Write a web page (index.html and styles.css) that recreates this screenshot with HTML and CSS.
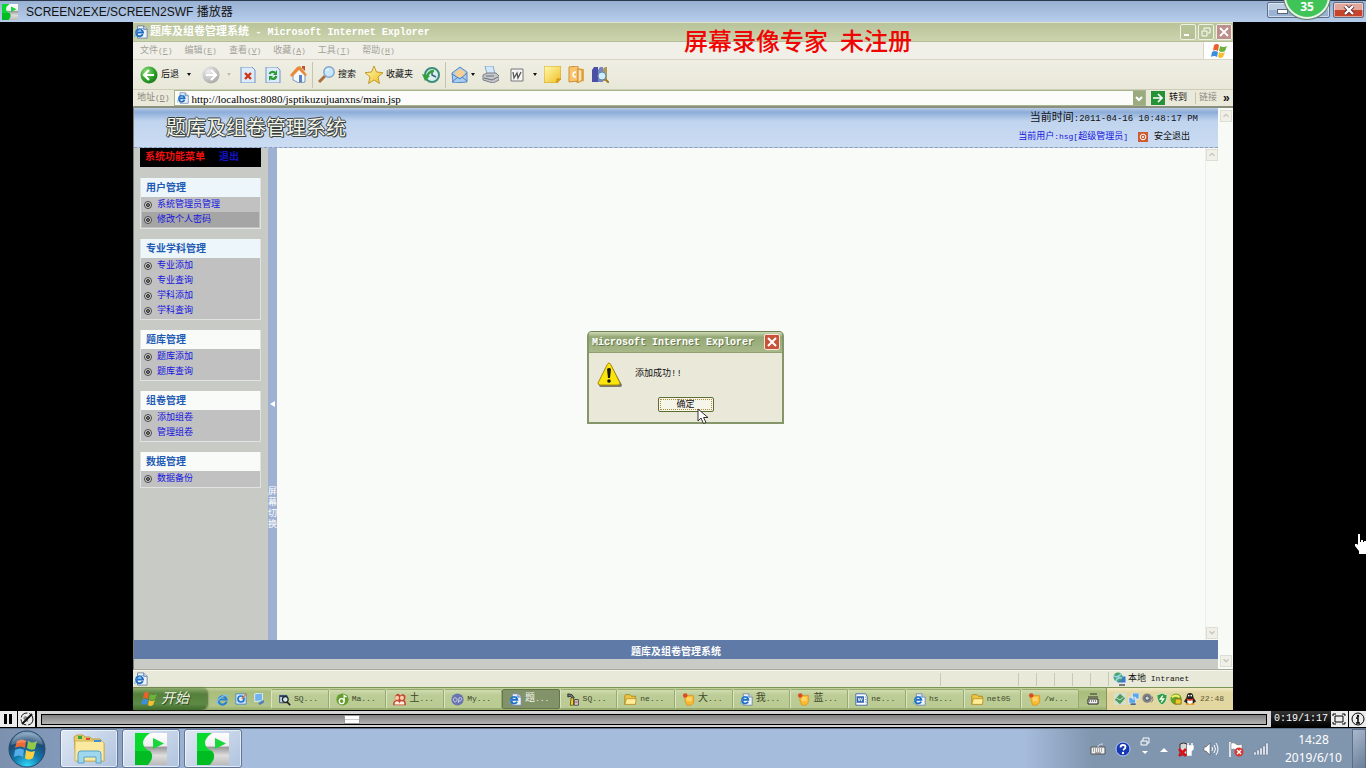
FILE: index.html
```html
<!DOCTYPE html>
<html lang="zh-CN">
<head>
    <meta charset="UTF-8">
    <meta name="viewport" content="width=device-width, initial-scale=1.0">
    <title>SCREEN2EXE/SCREEN2SWF 播放器</title>
    <link rel="stylesheet" href="styles.css">
</head>
<body>
    <!-- shared icons -->
    <svg class="defs" width="0" height="0">
        <defs>
            <linearGradient id="gold" x1="0" y1="0" x2="1" y2="1"><stop offset="0" stop-color="#fffbb0"/><stop offset="1" stop-color="#efbd22"/></linearGradient>
            <linearGradient id="silver" x1="0" y1="0" x2="0" y2="1"><stop offset="0" stop-color="#fff"/><stop offset=".4" stop-color="#eee"/><stop offset=".45" stop-color="#999"/><stop offset=".7" stop-color="#ddd"/><stop offset="1" stop-color="#bbb"/></linearGradient>
            <radialGradient id="green" cx=".35" cy=".3" r=".8"><stop offset="0" stop-color="#8fe07c"/><stop offset=".6" stop-color="#2fa02a"/><stop offset="1" stop-color="#17701a"/></radialGradient>
            <radialGradient id="grey" cx=".35" cy=".3" r=".8"><stop offset="0" stop-color="#eee"/><stop offset="1" stop-color="#a4a4a4"/></radialGradient>
            <radialGradient id="orb" cx=".5" cy="1" r="1"><stop offset="0" stop-color="#35e0ff"/><stop offset=".4" stop-color="#1278ac"/><stop offset=".75" stop-color="#1b4770"/><stop offset="1" stop-color="#8fb0cc"/></radialGradient>
        </defs>
        <symbol id="i-page" viewBox="0 0 16 16">
            <path d="M4 1h7l4 4v10H4z" fill="#eef4fc" stroke="#6a7fa0"/>
            <path d="M11 1v4h4" fill="#cdd9ea" stroke="#6a7fa0"/>
            <path d="M10 10.500A4 4 0 1 1 10.300 8.500H3" fill="none" stroke="#1f6cc4" stroke-width="2.200"/>
            <path d="M1 14C0 9 7 3 12 4" fill="none" stroke="#57a5e6"/>
        </symbol>
        <symbol id="i-ie" viewBox="0 0 16 16">
            <path d="M13 10.500A5 5 0 1 1 13 8H4" fill="none" stroke="#2680d8" stroke-width="2.600"/>
            <path d="M1 14C0 9 9 1 15 3" fill="none" stroke="#7cc4f2" stroke-width="1.300"/>
        </symbol>
        <symbol id="i-flag" viewBox="0 0 16 16">
            <path d="M3 2q3-2 5 0L7 8Q4 6 2 8z" fill="#e8612b"/>
            <path d="M9 3q3 2 7 0l-2 5q-3 2-6 0z" fill="#6cb33e"/>
            <path d="M1 9q3-2 6 0l-1 5Q3 12 0 14z" fill="#3d8fdc"/>
            <path d="M8 9q3 2 6 0l-2 5q-3 2-5 0z" fill="#f5bf2e"/>
        </symbol>
        <symbol id="i-folder" viewBox="0 0 16 16">
            <path d="M1 14V3l1-1h5l2 2h5v10z" fill="#f0c540" stroke="#a8821c"/>
            <path d="M1 14l2-7h12l-1 7z" fill="#ffed98" stroke="#b5902a"/>
        </symbol>
        <symbol id="i-note" viewBox="0 0 16 16">
            <path d="M3 3h11q1 6 0 9l-3 3H6q-3-5-3-12z" fill="#f9b930" stroke="#d9860f" stroke-width=".7"/>
            <path d="M5 5h7v5H6z" fill="#fdd567"/>
            <circle cx="4" cy="3" r="2.800" fill="#d94d22"/>
        </symbol>
        <symbol id="i-s" viewBox="0 0 32 32">
            <path d="M0 0h32v32H0z" fill="url(#silver)"/>
            <path d="M0 0h15Q8 5 8 10t7 8q5 6-2 13v1H0z" fill="#08d92d"/>
            <path d="M0 18h15q5 6-2 14H0z" fill="#00ac20" opacity=".65"/>
            <path d="M18 5l11 5.500-11 5.500z" fill="#18d63b"/>
        </symbol>
        <symbol id="i-bullet" viewBox="0 0 10 10">
            <circle cx="5" cy="5" r="3.500" fill="#d4d4d4" stroke="#444"/>
            <circle cx="5" cy="5" r="1.500" fill="#888" stroke="#222"/>
        </symbol>
        <symbol id="i-up" viewBox="0 0 12 12"><path d="M3 7l3-3 3 3" fill="none" stroke="#c4c6bc" stroke-width="1.600"/></symbol>
        <symbol id="i-down" viewBox="0 0 12 12"><path d="M3 4l3 3 3-3" fill="none" stroke="#c4c6bc" stroke-width="1.600"/></symbol>
        <symbol id="i-doc" viewBox="0 0 16 16">
            <path d="M1 1h12l2 3v11H1z" fill="#fff" stroke="#2e569c"/>
            <path d="M2 4h9v8H2z" fill="#2f62ad"/>
            <path d="M4 6l1 4 1.500-4L8 10l1-4" fill="none" stroke="#fff"/>
            <path d="M12 5h2M12 8h2M12 11h2" stroke="#5c83bd"/>
        </symbol>
    </svg>

    <header class="player-title">
        <svg class="player-logo"><use href="#i-s"/></svg>
        <h1>SCREEN2EXE/SCREEN2SWF 播放器</h1>
        <div class="player-buttons">
            <button class="win-min" aria-label="最小化"><i></i></button>
            <button class="win-close" aria-label="关闭">
                <svg width="12" height="10" viewBox="0 0 12 10"><path d="M2 1l8 8M10 1L2 9" stroke="#59303a" stroke-width="4"/><path d="M2 1l8 8M10 1L2 9" stroke="#fff" stroke-width="2.400"/></svg>
            </button>
        </div>
        <span class="fps-badge">35</span>
    </header>

    <main class="stage">
        <div class="screen">
            <div class="ie-title">
                <svg class="ic14"><use href="#i-page"/></svg>
                <h2>题库及组卷管理系统 <span class="en">- Microsoft Internet Explorer</span></h2>
                <div class="ie-buttons">
                    <button aria-label="最小化"><svg viewBox="0 0 14 14"><path d="M3 10h5" stroke="#fff" stroke-width="2"/></svg></button>
                    <button aria-label="还原"><svg viewBox="0 0 14 14"><path d="M5 5V3h6v5H9M3 6h5v5H3z" fill="none" stroke="#fff"/></svg></button>
                    <button class="close" aria-label="关闭"><svg viewBox="0 0 14 14"><path d="M3 3l8 8M11 3l-8 8" stroke="#fff" stroke-width="1.800"/></svg></button>
                </div>
            </div>
            <nav class="ie-menu">
                <button>文件<span class="en">(<u>F</u>)</span></button>
                <button>编辑<span class="en">(<u>E</u>)</span></button>
                <button>查看<span class="en">(<u>V</u>)</span></button>
                <button>收藏<span class="en">(<u>A</u>)</span></button>
                <button>工具<span class="en">(<u>T</u>)</span></button>
                <button>帮助<span class="en">(<u>H</u>)</span></button>
                <div class="throbber"><svg class="ic16"><use href="#i-flag"/></svg></div>
            </nav>
            <div class="ie-tools">
                <div class="group">
                    <button class="back">
                        <svg class="ic18" viewBox="0 0 18 18"><circle cx="9" cy="9" r="8.500" fill="url(#green)"/><path d="M9 4L4 9l5 5M4.500 9H14" fill="none" stroke="#fff" stroke-width="2.200"/></svg>
                        后退<i class="caret"></i>
                    </button>
                    <button class="forward" aria-label="前进">
                        <svg class="ic18" viewBox="0 0 18 18"><circle cx="9" cy="9" r="8.500" fill="url(#grey)"/><path d="M9 4l5 5-5 5M13.500 9H4" fill="none" stroke="#fff" stroke-width="2.200"/></svg>
                        <i class="caret off"></i>
                    </button>
                    <button aria-label="停止"><svg class="ic16" viewBox="0 0 16 16"><path d="M1 0h11l3 3v13H1z" fill="#dcecfc" stroke="#7394c4"/><path d="M5 6l6 6M11 6l-6 6" stroke="#d33413" stroke-width="2.400"/></svg></button>
                    <button aria-label="刷新"><svg class="ic16" viewBox="0 0 16 16"><path d="M1 0h11l3 3v13H1z" fill="#dcecfc" stroke="#7394c4"/><path d="M4.500 7Q6 4 10 5.500M11.500 9Q10 13 6 11.500" fill="none" stroke="#2a9a35" stroke-width="2.200"/><path d="M12 3v5H8zM4 14V9h4z" fill="#2a9a35"/></svg></button>
                    <button aria-label="主页"><svg class="ic17" viewBox="0 0 17 17"><path d="M3 8l6-5 6 6v7l-6 1-6-3z" fill="#f4f7fc" stroke="#7f96bd"/><path d="M9 9h3v7l-3 1z" fill="#5683c2"/><path d="M0 9l7-8 3-1 7 9-2 1-6-6-7 7z" fill="#e98a3a"/><path d="M12 0h3v5l-3-3z" fill="#c2502b"/></svg></button>
                    <i class="sep"></i>
                    <button class="label">
                        <svg class="ic17" viewBox="0 0 17 17"><path d="M1 16l6-6" stroke="#a9703f" stroke-width="3"/><circle cx="11" cy="6" r="5.200" fill="#c9e7fb" stroke="#7fa4d0" stroke-width="1.400"/><path d="M8 5q1-2 3-2" stroke="#fff" fill="none"/></svg>
                        搜索
                    </button>
                    <button class="label">
                        <svg class="ic18" viewBox="0 0 18 18"><path d="M9 0l2.500 6 6.500.700-5 4.300 1.500 6.500L9 14l-5.500 3.500L5 11 0 6.700 6.500 6z" fill="url(#gold)" stroke="#bd9122" stroke-width=".9"/></svg>
                        收藏夹
                    </button>
                    <button aria-label="历史"><svg class="ic18" viewBox="0 0 18 18"><circle cx="10" cy="9" r="7" fill="#d9f0ee" stroke="#3c8d78" stroke-width="2"/><path d="M10 4v5l4 2" fill="none" stroke="#355f7c" stroke-width="1.400"/><path d="M4 13Q6 5 12 5" fill="none" stroke="#35a13b" stroke-width="2.500"/><path d="M0 8l8 2-5 5z" fill="#35a13b"/></svg></button>
                    <i class="sep"></i>
                </div>
                <div class="group tight">
                    <button class="mail" aria-label="邮件"><svg class="ic17" viewBox="0 0 17 17"><path d="M1 7l8-6 7 5v10L2 17z" fill="#a8cdf1" stroke="#5b88bd"/><path d="M4 6l5-3 5 3-1 5H5z" fill="#f6d097"/><path d="M1 8l8 5 7-6M1 16l6-5M16 15l-5-4" fill="none" stroke="#4d7fba"/></svg><i class="caret"></i></button>
                    <button aria-label="打印"><svg class="ic17" viewBox="0 0 17 17"><path d="M3 0h8l2 8H5z" fill="#d3e8fb" stroke="#88a6c6"/><path d="M1 9l4-2h9l3 3v4l-6 3-10-3z" fill="#c5c7cb" stroke="#7a7e87"/><path d="M2 12l8 2 6-3M4 10h8" fill="none" stroke="#6c7078"/></svg></button>
                    <button class="word" aria-label="编辑"><svg class="ic14" viewBox="0 0 14 14"><path d="M1 1h12v12H1z" fill="#f5f5f5" stroke="#777"/><path d="M3 4l1 6 3-5 1 5 3-6" fill="none" stroke="#555" stroke-width="1.300"/></svg><i class="caret"></i></button>
                    <button aria-label="便笺"><svg class="ic17" viewBox="0 0 17 17"><path d="M0 0h17v13l-4 4H0z" fill="url(#gold)" stroke="#d6a52b"/><path d="M13 17v-4h4" fill="#e3a51c" stroke="#c98e16"/></svg></button>
                    <button aria-label="文件夹"><svg class="ic17" viewBox="0 0 17 17"><path d="M8 2l8 1v12l-8 2z" fill="#e7a948"/><path d="M1 1l9-1v15l-9 1z" fill="#f9c46d" stroke="#cf8f34"/><path d="M10 3l4 1v10l-4 3z" fill="#fbe0ae" stroke="#cf8f34"/><path d="M8 6q-3 0-3 2.500T8 11" fill="none" stroke="#fff" stroke-width="1.400"/></svg></button>
                    <button aria-label="信息检索"><svg class="ic17" viewBox="0 0 17 17"><path d="M0 4l2-3h4v15H0z" fill="#4b50a5"/><path d="M6 4l2-3h3v15H6z" fill="#7487c5"/><path d="M11 3l2-2h2v14h-4z" fill="#b09a58"/><circle cx="10" cy="10" r="4" fill="#d3ecf9" stroke="#5b87b0"/><path d="M13 13l4 4" stroke="#9f7b2b" stroke-width="2"/></svg></button>
                </div>
            </div>
            <div class="ie-address">
                <label for="url">地址<span class="en">(<u>D</u>)</span></label>
                <div class="url-box">
                    <svg class="ic12"><use href="#i-page"/></svg>
                    <input id="url" type="text" value="http://localhost:8080/jsptikuzujuanxns/main.jsp">
                    <button class="drop" aria-label="地址列表"><svg viewBox="0 0 12 13"><path d="M3 5l3 3 3-3" fill="none" stroke="#fff" stroke-width="2"/></svg></button>
                </div>
                <button class="go"><svg class="ic14" viewBox="0 0 14 14"><path d="M0 0h14v14H0z" fill="#259238"/><path d="M7 3l4 4-4 4M11 7H2" fill="none" stroke="#fff" stroke-width="1.700"/></svg>转到</button>
                <button class="links">链接</button>
                <span class="more">»</span>
            </div>

            <div class="viewport">
                <div class="page">
                    <div class="banner">
                        <div class="banner-title">题库及组卷管理系统</div>
                        <div class="banner-info">
                            <p class="now"><span class="cn">当前时间</span>:2011-04-16 10:48:17 PM</p>
                            <p class="user">
                                <a href="#">当前用户<span class="en">:hsg[</span>超级管理员<span class="en">]</span></a>
                                <svg width="10" height="10" viewBox="0 0 10 10"><path d="M0 0h10v10H0z" fill="#cf5a33"/><circle cx="5" cy="5" r="2.800" fill="none" stroke="#fff"/><circle cx="5" cy="5" r="1" fill="#fff"/></svg>
                                <a href="#" class="logout">安全退出</a>
                            </p>
                        </div>
                    </div>
                    <div class="frames">
                        <aside class="sidebar">
                            <div class="menu-top"><b>系统功能菜单</b><a href="#">退出</a></div>
                            <section class="menu-box tint">
                                <h3>用户管理</h3>
                                <ul>
                                    <li><svg><use href="#i-bullet"/></svg><a href="#">系统管理员管理</a></li>
                                    <li class="hover"><svg><use href="#i-bullet"/></svg><a href="#">修改个人密码</a></li>
                                </ul>
                            </section>
                            <section class="menu-box tint">
                                <h3>专业学科管理</h3>
                                <ul>
                                    <li><svg><use href="#i-bullet"/></svg><a href="#">专业添加</a></li>
                                    <li><svg><use href="#i-bullet"/></svg><a href="#">专业查询</a></li>
                                    <li><svg><use href="#i-bullet"/></svg><a href="#">学科添加</a></li>
                                    <li><svg><use href="#i-bullet"/></svg><a href="#">学科查询</a></li>
                                </ul>
                            </section>
                            <section class="menu-box">
                                <h3>题库管理</h3>
                                <ul>
                                    <li><svg><use href="#i-bullet"/></svg><a href="#">题库添加</a></li>
                                    <li><svg><use href="#i-bullet"/></svg><a href="#">题库查询</a></li>
                                </ul>
                            </section>
                            <section class="menu-box">
                                <h3>组卷管理</h3>
                                <ul>
                                    <li><svg><use href="#i-bullet"/></svg><a href="#">添加组卷</a></li>
                                    <li><svg><use href="#i-bullet"/></svg><a href="#">管理组卷</a></li>
                                </ul>
                            </section>
                            <section class="menu-box">
                                <h3>数据管理</h3>
                                <ul>
                                    <li><svg><use href="#i-bullet"/></svg><a href="#">数据备份</a></li>
                                </ul>
                            </section>
                        </aside>
                        <button class="toggle">
                            <svg width="5" height="6" viewBox="0 0 5 6"><path d="M5 0v6L0 3z" fill="#fff"/></svg>
                            <span>屏幕切换</span>
                        </button>
                        <div class="content"></div>
                        <div class="scrollbar inner">
                            <button aria-label="向上"><svg><use href="#i-up"/></svg></button>
                            <button aria-label="向下"><svg><use href="#i-down"/></svg></button>
                        </div>
                    </div>
                    <footer class="page-footer">题库及组卷管理系统</footer>
                </div>
                <div class="scrollbar">
                    <button aria-label="向上"><svg><use href="#i-up"/></svg></button>
                    <button aria-label="向下"><svg><use href="#i-down"/></svg></button>
                </div>
            </div>

            <div class="ie-status">
                <svg class="ic14"><use href="#i-page"/></svg>
                <div class="cells"><i class="wide"></i><i></i><i></i><i></i><i></i><i></i></div>
                <div class="zone">
                    <svg class="ic14" viewBox="0 0 14 14"><path d="M4 4h9v7H4z" fill="#3c77c8" stroke="#dfe9f4"/><circle cx="5" cy="5" r="4.500" fill="#46a46d"/><path d="M1 4q4 2 7-2M3 9q1-4 6-3" stroke="#9cd5f0" fill="none" stroke-width="1.500"/><path d="M6 13h6" stroke="#555" stroke-width="1.500"/></svg>
                    <span>本地<span class="en"> Intranet</span></span>
                </div>
            </div>

            <div class="xp-bar">
                <button class="start"><svg class="ic16"><use href="#i-flag"/></svg>开始</button>
                <div class="quick">
                    <svg class="ic13"><use href="#i-ie"/></svg>
                    <svg class="ic12" viewBox="0 0 14 14"><path d="M1 1h12v12H1z" fill="#dceafa" stroke="#3c84cd"/><circle cx="7" cy="7" r="3.500" fill="none" stroke="#2377cb" stroke-width="2"/><path d="M8 7l5-6" stroke="#e1762b" stroke-width="1.500"/></svg>
                    <svg class="ic12" viewBox="0 0 14 14"><path d="M2 1l9-1v9l-9 1z" fill="#70b2ef" stroke="#e8f3fd"/><path d="M6 12l6-4 1 3-5 3z" fill="#4e80c0"/></svg>
                </div>
                <div class="tasks">
                    <button><svg class="ic13" viewBox="0 0 16 16"><path d="M2 3h9v9H2z" fill="#c6d2e5" stroke="#27374d"/><path d="M2 3h9v2H2z" fill="#26467d"/><circle cx="9" cy="8" r="3.500" fill="#cde9ee" stroke="#222" stroke-width="1.500"/><path d="M11 11l4 4" stroke="#222" stroke-width="2"/></svg>SQ...</button>
                    <button><svg class="ic13" viewBox="0 0 16 16"><circle cx="8" cy="8" r="7.500" fill="#659d2f"/><circle cx="7" cy="10" r="3" fill="none" stroke="#fff" stroke-width="1.600"/><path d="M10 10V3l3 2" fill="none" stroke="#fff" stroke-width="1.500"/></svg>Ma...</button>
                    <button><svg class="ic13" viewBox="0 0 16 16"><path d="M0 15q0-6 4-6-3-3-1-6 3-4 6 0 3-3 6 0 1 4-1 6 2 1 2 6z" fill="#c64734"/><circle cx="5" cy="6" r="2.500" fill="#f6cfa8"/><circle cx="11" cy="6" r="2.500" fill="#f6cfa8"/><path d="M2 14q0-4 3-4t3 4q0-4 3-4t3 4z" fill="#fff0df"/></svg><b>土</b>...</button>
                    <button><svg class="ic13" viewBox="0 0 16 16"><circle cx="8" cy="8" r="7.500" fill="#6975ae"/><path d="M3 9q0-4 3-3t1 4-4-1zM9 12l1-6q4-1 3 2t-4 2" fill="none" stroke="#d8def4"/></svg>My...</button>
                    <button class="active"><svg class="ic13"><use href="#i-page"/></svg><b>题</b>...</button>
                    <button><svg class="ic13" viewBox="0 0 16 16"><path d="M1 1l5 1 3 4-2 1-3-3-3 1z" fill="#777" stroke="#222"/><path d="M5 6h3v9H4z" fill="#f0ce32" stroke="#594d16"/><path d="M9 8h5v7H9z" fill="#e7e9ed" stroke="#333"/><path d="M10 10h3M10 12h3" stroke="#b23451"/></svg>SQ...</button>
                    <button><svg class="ic13"><use href="#i-folder"/></svg>ne...</button>
                    <button><svg class="ic13"><use href="#i-note"/></svg><b>大</b>...</button>
                    <button><svg class="ic13"><use href="#i-page"/></svg><b>我</b>...</button>
                    <button><svg class="ic13"><use href="#i-note"/></svg><b>蓝</b>...</button>
                    <button><svg class="ic13"><use href="#i-doc"/></svg>ne...</button>
                    <button><svg class="ic13"><use href="#i-page"/></svg>hs...</button>
                    <button><svg class="ic13"><use href="#i-folder"/></svg>net05</button>
                    <button><svg class="ic13"><use href="#i-note"/></svg>/w...</button>
                </div>
                <div class="lang"><svg class="ic12" viewBox="0 0 12 12"><path d="M3 1h7M1 4h10" stroke="#333"/><path d="M1 6h10v5H1z" fill="#eee" stroke="#222"/><path d="M2 8h8" stroke="#222" stroke-dasharray="1 1"/></svg></div>
                <div class="xp-tray">
                    <svg class="ic12" viewBox="0 0 14 14"><path d="M0 0h14v14H0z" fill="#d5dfd0"/><path d="M7 1l6 5-6 7-6-5z" fill="#4f9a60"/><path d="M3 6l4 2 4-3" stroke="#d4eed6" fill="none"/></svg>
                    <svg class="ic12" viewBox="0 0 14 14"><path d="M5 0h8v7H5zM1 5h8v7H1z" fill="#5ea4e9" stroke="#e3f1ff"/><path d="M3 13h6" stroke="#46668b" stroke-width="2"/></svg>
                    <svg class="ic12" viewBox="0 0 14 14"><circle cx="6" cy="6" r="5.500" fill="#7f8288"/><circle cx="6" cy="6" r="2.500" fill="#d6d7dc" stroke="#44464d"/><path d="M11 11q3-3 1-7" stroke="#777" fill="none"/></svg>
                    <svg class="ic12" viewBox="0 0 14 14"><path d="M7 0q3 2 6 2 0 9-6 12Q1 11 1 2q3 0 6-2z" fill="#319c43" stroke="#d9f1d9"/><path d="M8 3L5 7h4l-3 4" fill="none" stroke="#fff" stroke-width="1.500"/></svg>
                    <svg class="ic12" viewBox="0 0 14 14"><circle cx="7" cy="7" r="6.500" fill="#62a52e"/><path d="M2 5q5-4 9 0" stroke="#f5ef60" stroke-width="2.500" fill="none"/><path d="M6 7h7v6H6z" fill="#edc82b" stroke="#8a6b13"/></svg>
                    <svg class="ic12" viewBox="0 0 14 14"><path d="M7 0q4 0 4 5l3 5-2 1-1 2H3l-1-2-2-1 3-5q0-5 4-5z" fill="#222"/><path d="M7 7q4 0 3 5-3 2-6 0-1-5 3-5z" fill="#fff"/><path d="M3 6q4 2 8 0v2q-4 2-8 0z" fill="#dd2f1d"/><circle cx="5.500" cy="3" r="1" fill="#fff"/><circle cx="8.500" cy="3" r="1" fill="#fff"/><path d="M2 13h4M8 13h4" stroke="#eda122" stroke-width="2"/></svg>
                    <time>22:48</time>
                </div>
            </div>

            <div class="watermark">屏幕录像专家&nbsp; 未注册</div>

            <div class="dialog" role="alertdialog" aria-labelledby="dialog-title">
                <div class="dialog-title">
                    <h2 id="dialog-title">Microsoft Internet Explorer</h2>
                    <button aria-label="关闭"><svg viewBox="0 0 14 14"><path d="M3 3l8 8M11 3l-8 8" stroke="#fff" stroke-width="2"/></svg></button>
                </div>
                <div class="dialog-body">
                    <svg width="26" height="26" viewBox="0 0 26 26"><path d="M13 3q1 0 2 2l10 18q0 2-2 2H4q-2 0-2-2z" fill="#77776a"/><path d="M12 1q1 0 2 2l9 18q0 2-2 2H3q-2 0-2-2L10 3q1-2 2-2z" fill="#fbe40a" stroke="#a88a0b"/><path d="M10 7q2-2 4 0l-1 9h-2z" fill="#16160e"/><circle cx="12" cy="19" r="1.800" fill="#16160e"/></svg>
                    <p>添加成功!!</p>
                </div>
                <button class="ok">确定</button>
                <svg class="cursor" width="12" height="18" viewBox="0 0 12 18"><path d="M1 1v12l3-3 2.500 5.500 2.500-1L6.500 9.500H11z" fill="#fff" stroke="#333"/></svg>
            </div>
        </div>
        <svg class="hand" width="12" height="22" viewBox="0 0 12 22"><path d="M4 1h2v8h1V7h2v2h1V8h2v13H5v-3L1 13v-2h2l1 1z" fill="#fff"/></svg>
    </main>

    <div class="player-bar">
        <button aria-label="暂停"><svg width="16" height="16" viewBox="0 0 16 16"><path d="M4 3h3v10H4zM9 3h3v10H9z"/></svg></button>
        <button aria-label="循环"><svg width="16" height="16" viewBox="0 0 16 16"><circle cx="8" cy="8" r="6" fill="none" stroke="#111" stroke-dasharray="8 2"/><path d="M4 7l2-2 3 1v5l-3-1z" fill="#888"/><path d="M3 13L13 3" stroke="#111" stroke-width="2"/></svg></button>
        <div class="seek"><input type="range" min="0" max="76" value="19" aria-label="进度"></div>
        <output>0:19/1:17</output>
        <button aria-label="全屏"><svg width="16" height="16" viewBox="0 0 16 16"><path d="M4 5h8v6H4z" fill="none" stroke="#000"/><path d="M2 5V3h3M11 3h3v2M14 11v2h-3M5 13H2v-2" fill="none" stroke="#000"/></svg></button>
        <button aria-label="信息"><svg width="16" height="16" viewBox="0 0 16 16"><circle cx="8" cy="8" r="6" fill="none" stroke="#000"/><circle cx="8" cy="5" r="1.200"/><path d="M6 7h2v5M6 12h4" fill="none" stroke="#000" stroke-width="1.500"/></svg></button>
    </div>

    <div class="win7-bar">
        <button class="orb" aria-label="开始">
            <svg width="38" height="38" viewBox="0 0 38 38"><circle cx="19" cy="19" r="18" fill="url(#orb)" stroke="#27496b"/><path d="M9 11q5-3 9 0l-1 7q-5-3-10 0z" fill="#ee6a35"/><path d="M20 11q5 3 9 0l-2 8q-4 2-8-1z" fill="#94c947"/><path d="M7 20q5-3 9 0l-1 7q-4-3-9 0z" fill="#54aeea"/><path d="M18 20q4 3 9 1l-2 7q-5 3-8 0z" fill="#fbcf42"/><path d="M3 15Q6 3 19 3t16 12q-15-6-32 0z" fill="#fff" opacity=".22"/></svg>
        </button>
        <button class="app" aria-label="资源管理器">
            <svg width="32" height="32" viewBox="0 0 32 32"><path d="M1 4l3-2h6l2 2h5l2 2h8l4 4v18H3z" fill="#e9cb69" stroke="#b99e4c"/><path d="M2 8h27l2 2v18H2z" fill="#fae99f" stroke="#cfb765"/><path d="M5 3h4v3H5z" fill="#37a83c"/><path d="M13 5h4v2h-4z" fill="#d94c32"/><path d="M21 7h7v2h-7z" fill="#3f93d5"/><path d="M5 30V21q0-3 3-3h17q3 0 3 3v9h-5v-6H11v6z" fill="#9fd7ee" stroke="#5aa3c6"/></svg>
        </button>
        <button class="app" aria-label="播放器"><svg width="32" height="32"><use href="#i-s"/></svg></button>
        <button class="app" aria-label="播放器"><svg width="32" height="32"><use href="#i-s"/></svg></button>
        <div class="win7-tray">
            <svg width="16" height="16" viewBox="0 0 16 16"><path d="M1 6h14v7H1z" fill="#f1f1f1" stroke="#555"/><path d="M3 8h10M3 10h10" stroke="#666" stroke-dasharray="1 1"/><path d="M5 12h6" stroke="#666"/><path d="M8 6q0-3 5-3" fill="none" stroke="#ddd"/></svg>
            <svg width="16" height="16" viewBox="0 0 16 16"><circle cx="8" cy="8" r="7" fill="#1438b4" stroke="#b9c9ee"/><path d="M5.500 6.500q0-2.500 2.500-2.500t2.500 2q0 1.500-2.500 3" fill="none" stroke="#fff" stroke-width="1.800"/><circle cx="8" cy="12" r="1.200" fill="#fff"/></svg>
            <svg class="restore" width="10" height="18" viewBox="0 0 10 18"><path d="M3 4V1h6v5H7M1 4h6v4H1z" fill="none" stroke="#fff"/><path d="M2 14h6l-3 3z" fill="#fff"/></svg>
            <svg width="10" height="10" viewBox="0 0 10 10"><path d="M1 8l4-4 4 4z" fill="#fff"/></svg>
            <svg width="16" height="16" viewBox="0 0 16 16"><path d="M2 3q4-2 7 0v11H2z" fill="#d8d8d8" stroke="#333"/><path d="M10 5V2M14 5V2M9 5h6v3l-2 2v4h-4" fill="#fff" stroke="#fff" stroke-width="1.400"/><path d="M1 8l7 7M8 8l-7 7" stroke="#d41217" stroke-width="2.500"/></svg>
            <svg width="16" height="16" viewBox="0 0 16 16"><path d="M1 6h2l4-4v12l-4-4H1z" fill="#fff" stroke="#555" stroke-width=".6"/><path d="M9 6q1 2 0 4M11 4q3 4 0 8M13 2q4 6 0 12" fill="none" stroke="#fff"/></svg>
            <svg width="16" height="16" viewBox="0 0 16 16"><path d="M2 1v15" stroke="#fff" stroke-width="1.500"/><path d="M3 2q3-1 5 1t6 0v6q-3 2-6 0T3 9z" fill="#fff" stroke="#777" stroke-width=".6"/><circle cx="11" cy="11" r="4.500" fill="#d93832"/><path d="M9 9l4 4M13 9l-4 4" stroke="#fff" stroke-width="1.400"/></svg>
            <svg width="16" height="16" viewBox="0 0 16 16"><path d="M1 11h2v3H1zM4 9h2v5H4zM7 7h2v7H7zM10 5h2v9h-2zM13 2h2v12h-2z" fill="#fff" stroke="#64768c" stroke-width=".5"/></svg>
        </div>
        <time class="clock"><span>14:28</span><span>2019/6/10</span></time>
        <button class="show-desktop" aria-label="显示桌面"></button>
    </div>
</body>
</html>
```
FILE: styles.css
```css
* {
    margin: 0;
    padding: 0;
    box-sizing: border-box;
}

body {
    display: flex;
    flex-direction: column;
    height: 100vh;
    overflow: hidden;
    background: #000;
    font-family: "Liberation Mono", "Noto Sans CJK SC", monospace;
    font-size: 9px;
    line-height: 12px;
    color: #111;
}

button,
input {
    border: none;
    background: none;
    font: inherit;
    color: inherit;
}

svg {
    flex: none;
    display: block;
}

a {
    color: #1414e0;
    text-decoration: none;
}

.defs {
    position: absolute;
}

.en {
    font-size: 8px;
}

.ic12 { width: 12px; height: 12px; }
.ic13 { width: 13px; height: 13px; }
.ic14 { width: 14px; height: 14px; }
.ic16 { width: 16px; height: 16px; }
.ic17 { width: 17px; height: 17px; }
.ic18 { width: 18px; height: 18px; }

/* player window */
.player-title {
    position: relative;
    flex: none;
    display: flex;
    align-items: center;
    height: 22px;
    padding: 0 2px;
    border-top: 1px solid #2c394c;
    background: linear-gradient(#98b1d2, #b8cdec);
}

.player-logo {
    width: 16px;
    height: 16px;
    margin-right: 8px;
}

.player-title h1 {
    font: 400 12px/16px "Liberation Sans", "Noto Sans CJK SC", sans-serif;
}

.player-buttons {
    display: flex;
    gap: 3px;
    margin-left: auto;
    align-self: flex-start;
    padding-top: 1px;
}

.player-buttons button {
    display: flex;
    align-items: center;
    justify-content: center;
    height: 16px;
    border: 1px solid #5c6f8c;
    border-radius: 2px;
    box-shadow: inset 0 0 0 1px rgba(255, 255, 255, 0.5);
}

.win-min {
    width: 63px;
    background: linear-gradient(#bccde4 50%, #9bb2d0 50%);
}

.win-min i {
    width: 11px;
    height: 5px;
    margin-right: 33px;
    margin-top: 3px;
    border: 1px solid #5a6474;
    background: #fff;
}

.win-close {
    width: 31px;
    background: linear-gradient(#e2a69a 50%, #c8432c 50%);
}

.fps-badge {
    position: absolute;
    top: -28px;
    right: 36px;
    width: 46px;
    height: 46px;
    padding-top: 25px;
    border: 2px solid #e6f3e7;
    border-radius: 50%;
    background: #40c457;
    box-shadow: 0 0 1px 1px #5b7765;
    color: #fff;
    font: 700 12px/14px "Open Sans", sans-serif;
    text-align: center;
}

.stage {
    position: relative;
    flex: 1;
    display: flex;
    min-height: 0;
    padding: 0 133px;
}

.screen {
    position: relative;
    flex: 1;
    display: flex;
    flex-direction: column;
    min-width: 0;
    background: #ecebdf;
}

.hand {
    position: absolute;
    right: 0;
    top: 511px;
}

/* Internet Explorer chrome */
.ie-title {
    display: flex;
    align-items: center;
    gap: 2px;
    height: 20px;
    padding: 0 1px;
    border-top: 1px solid #dde2c8;
    border-bottom: 1px solid #b3bd97;
    background: linear-gradient(#b9c399, #cbd4ae);
}

.ie-title h2 {
    color: #fff;
    font-size: 11px;
    line-height: 16px;
}

.ie-title h2 .en {
    font-size: 10px;
}

.ie-buttons {
    display: flex;
    gap: 2px;
    margin-left: auto;
}

.ie-buttons button {
    width: 16px;
    height: 16px;
    border: 1px solid #eef0e2;
    border-radius: 2px;
    background: #b5c296;
}

.ie-buttons .close {
    background: #bc8f8d;
}

.ie-menu {
    display: flex;
    align-items: center;
    gap: 12px;
    height: 18px;
    padding-left: 7px;
    border-bottom: 1px solid #d8d6c6;
    background: #f0efe8;
    color: #a3a298;
}

.throbber {
    display: flex;
    align-items: center;
    justify-content: center;
    width: 30px;
    height: 17px;
    margin-left: auto;
    border-left: 1px solid #d8d6c6;
    background: #fff;
}

.ie-tools {
    display: flex;
    align-items: center;
    height: 30px;
    padding-left: 7px;
    border-bottom: 1px solid #cfcdb9;
    background: linear-gradient(#efeee4, #e8e8d8);
}

.group {
    display: flex;
    align-items: center;
    gap: 9px;
}

.group.tight {
    gap: 7px;
    padding-left: 9px;
}

.group button {
    display: flex;
    align-items: center;
    white-space: nowrap;
}

.back,
.label {
    gap: 3px;
}

.caret {
    margin-left: 3px;
    border: 2px solid transparent;
    border-top: 3px solid #111;
    border-bottom: none;
}

.back .caret {
    margin: 0 2px 0 5px;
}

.caret.off {
    margin-left: 7px;
    border-top-color: #bdbcb0;
}

.group .word {
    justify-content: flex-end;
    gap: 6px;
    width: 31px;
}

.sep {
    width: 1px;
    height: 26px;
    margin: 0 -4px;
    background: #c6c4b0;
}

.ie-address {
    display: flex;
    align-items: center;
    height: 18px;
    border-bottom: 2px solid #8b8f7d;
    background: #ebe9da;
}

.ie-address label {
    padding: 0 5px 0 4px;
    color: #85847a;
}

.url-box {
    flex: 1;
    display: flex;
    align-items: center;
    gap: 2px;
    height: 16px;
    padding-left: 2px;
    border: 1px solid #a7b58a;
    background: #fcfdfb;
}

.url-box input {
    flex: 1;
    padding-top: 1px;
    outline: none;
    font: 11px/12px "Liberation Serif", serif;
    color: #000;
}

.drop {
    width: 12px;
    height: 14px;
    background: #9cab7f;
}

.drop svg {
    width: 12px;
    height: 13px;
}

.go {
    display: flex;
    align-items: center;
    gap: 4px;
    padding: 0 8px 0 5px;
}

.links {
    padding: 0 6px 0 3px;
    border-left: 1px solid #c6c4b0;
    color: #8b8a80;
}

.more {
    width: 10px;
    font: 700 12px/10px "Liberation Sans", sans-serif;
}

/* browser viewport */
.viewport {
    flex: 1;
    display: flex;
    min-height: 0;
    border-left: 1px solid #7e7e7a;
    border-bottom: 1px solid #a8a89a;
    background: #c9cbc7;
}

.page {
    flex: 1;
    display: flex;
    flex-direction: column;
    padding-bottom: 10px;
}

.banner {
    display: flex;
    justify-content: space-between;
    height: 40px;
    padding: 0 20px 0 32px;
    border-bottom: 1px dashed #8a9dbd;
    background: linear-gradient(#b9cbe4, #8cacd9 4px, #c0d4ee 13px, #cbdcf2);
}

.banner-title {
    padding-top: 6px;
    color: #f4f4e8;
    font-size: 20px;
    line-height: 32px;
    text-shadow: 1px 0 #38403e, -1px 0 #38403e, 0 1px #38403e, 0 -1px #38403e, 1px 1px #38403e;
}

.now {
    padding-top: 2px;
    line-height: 16px;
    text-align: right;
}

.now .cn {
    font-size: 11px;
}

.user {
    display: flex;
    align-items: center;
    justify-content: flex-end;
    gap: 10px;
    padding: 1px 8px 0 0;
    line-height: 18px;
}

.logout {
    margin-left: -4px;
    color: #111;
}

.frames {
    flex: 1;
    display: flex;
    min-height: 0;
}

.sidebar {
    width: 134px;
    padding: 0 7px 0 6px;
    background: #c8cac6;
}

.menu-top {
    display: flex;
    gap: 14px;
    height: 19px;
    margin-bottom: 11px;
    padding-left: 5px;
    background: #000;
    color: #f01010;
    font-size: 10px;
    line-height: 19px;
}

.menu-top a {
    font-weight: 700;
    color: #1212c8;
}

.menu-box {
    margin-bottom: 10px;
    border: 1px solid #e0e3e0;
    border-top: none;
    background: #c1c1c1;
}

.menu-box h3 {
    height: 19px;
    padding: 2px 0 0 5px;
    background: #f9fbf9;
    color: #1f5bb5;
    font-size: 10px;
    line-height: 18px;
}

.tint h3 {
    background: #edf6fa;
}

.menu-box ul {
    padding: 0 1px 1px;
    list-style: none;
}

.menu-box li {
    display: flex;
    align-items: center;
    gap: 4px;
    height: 15px;
    padding-left: 1px;
}

.menu-box li svg {
    width: 10px;
    height: 10px;
}

.menu-box .hover {
    background: #a5a5a5;
}

.toggle {
    display: grid;
    grid-template-rows: 1fr auto 1fr;
    justify-items: center;
    width: 9px;
    padding-top: 20px;
    background: #9fb1d2;
    color: #fff;
    line-height: 11px;
}

.toggle svg {
    grid-row: 2;
}

.toggle span {
    grid-row: 3;
    width: 9px;
    padding-top: 80px;
    word-break: break-all;
}

.content {
    flex: 1;
    background: #f9fbf8;
}

.scrollbar {
    display: flex;
    flex-direction: column;
    justify-content: space-between;
    align-items: center;
    width: 15px;
    padding: 2px 0;
    background: #f8faf6;
}

.scrollbar.inner {
    width: 13px;
    padding: 1px 0;
    border-left: 1px solid #eceee8;
}

.scrollbar button {
    width: 12px;
    height: 12px;
    border: 1px solid #dcded4;
    background: #f0f0e8;
}

.scrollbar svg {
    width: 10px;
    height: 10px;
}

.page-footer {
    height: 19px;
    padding-top: 6px;
    background: #5f7aa6;
    color: #fff;
    font-size: 10px;
    font-weight: 700;
    line-height: 14px;
    text-align: center;
}

.ie-status {
    display: flex;
    align-items: center;
    height: 17px;
    padding-left: 1px;
    border-top: 1px solid #f7f7ef;
    background: #e9e9d9;
}

.cells {
    display: flex;
    margin-left: auto;
}

.cells i {
    width: 18px;
    height: 13px;
    border-left: 1px solid #c9c8b6;
}

.cells .wide {
    width: 78px;
}

.zone {
    display: flex;
    align-items: center;
    gap: 1px;
    width: 125px;
    padding-left: 4px;
    border-left: 1px solid #c9c8b6;
}

/* XP taskbar */
.xp-bar {
    display: flex;
    height: 23px;
    border-top: 1px solid #7c9455;
    background: linear-gradient(#c3d29b, #a9bd7c 4px, #b3c589 18px, #93aa68);
}

.start {
    display: flex;
    align-items: center;
    gap: 4px;
    width: 74px;
    padding-left: 8px;
    border-radius: 0 6px 6px 0;
    background: linear-gradient(#8cab6c, #55803c 6px, #5d8a45 16px, #3f692b);
    box-shadow: 1px 0 2px #52683a;
    color: #eef3e2;
    font-size: 14px;
    font-style: italic;
    text-shadow: 1px 1px #2f4a22;
}

.quick {
    display: flex;
    align-items: center;
    justify-content: center;
    gap: 6px;
    width: 64px;
    padding-left: 2px;
}

.tasks {
    flex: 1;
    display: flex;
    min-width: 0;
    padding: 1px 0;
}

.tasks button {
    flex: 1;
    display: flex;
    align-items: center;
    min-width: 0;
    padding-left: 6px;
    border: 1px solid #98aa72;
    border-left-color: #dce5c2;
    border-radius: 2px;
    background: linear-gradient(#d0dcb0, #bdcd97 5px, #b9ca92);
    color: #40482a;
    font-size: 8px;
    white-space: nowrap;
}

.tasks svg {
    margin-right: 3px;
}

.tasks b {
    font-size: 10px;
    font-weight: 400;
}

.tasks .active {
    border-color: #66764c;
    background: #829269;
    color: #f2f5ea;
}

.lang {
    display: flex;
    align-items: center;
    justify-content: center;
    width: 27px;
}

.xp-tray {
    display: flex;
    align-items: center;
    gap: 2px;
    width: 127px;
    padding-left: 7px;
    border-left: 1px solid #8a935f;
    background: linear-gradient(#f1e8c2, #e2d7a1 5px, #e2d7a1);
}

.xp-tray time {
    margin-left: 2px;
    color: #5d5636;
    font-size: 8px;
}

.watermark {
    position: absolute;
    top: 5px;
    left: 551px;
    color: #f00505;
    font: 500 24px/30px "Liberation Serif", "Noto Sans CJK SC", serif;
    white-space: nowrap;
}

/* alert dialog */
.dialog {
    position: absolute;
    top: 309px;
    left: 454px;
    width: 197px;
    height: 93px;
    border: 2px solid #84966a;
    border-top: 1px solid #6e8152;
    border-radius: 5px 5px 0 0;
    background: #e9e8d9;
}

.dialog-title {
    display: flex;
    align-items: center;
    justify-content: space-between;
    height: 21px;
    padding: 0 2px 0 3px;
    border-bottom: 1px solid #8ea071;
    border-radius: 4px 4px 0 0;
    background: linear-gradient(#cfd9b6, #93a774 5px, #a9b989);
}

.dialog-title h2 {
    padding-top: 2px;
    color: #fff;
    font-size: 10px;
    text-shadow: 1px 1px #68794e;
}

.dialog-title button {
    width: 16px;
    height: 16px;
    border: 1px solid #f5e5df;
    border-radius: 2px;
    background: #c75439;
}

.dialog-body {
    display: flex;
    gap: 12px;
    padding: 9px 8px;
}

.dialog-body p {
    padding-top: 6px;
}

.ok {
    display: block;
    width: 56px;
    height: 15px;
    margin: 0 auto;
    border: 1px solid #5c6d36;
    border-radius: 2px;
    background: #f6f5ea;
    outline: 1px dotted #b08c3c;
    outline-offset: -3px;
}

.cursor {
    position: absolute;
    left: 108px;
    top: 76px;
}

/* player controls */
.player-bar {
    flex: none;
    display: flex;
    align-items: center;
    height: 18px;
    border: solid #000;
    border-width: 1px 0;
    background: #d4d4d4;
}

.player-bar button {
    width: 17px;
    height: 16px;
    background: #ececec;
}

.player-bar button + button {
    width: 18px;
    padding-left: 1px;
    border-left: 1px solid #000;
}

.seek {
    flex: 1;
    display: flex;
    align-items: center;
    height: 16px;
    padding: 0 4px;
    border-left: 2px solid #000;
}

.seek input {
    flex: 1;
    height: 11px;
    appearance: none;
    border: 1px solid #000;
    background: linear-gradient(#7f7f7f, #b3b3b3);
}

.seek input::-webkit-slider-thumb {
    appearance: none;
    width: 16px;
    height: 9px;
    border: 1px solid #999;
    background: linear-gradient(#fff 40%, #ccc 50%, #fff 60%);
}

.player-bar output {
    height: 16px;
    padding: 0 3px;
    background: linear-gradient(#333, #000);
    color: #fff;
    font-size: 10px;
    line-height: 16px;
}

/* Windows 7 taskbar */
.win7-bar {
    flex: none;
    display: flex;
    align-items: center;
    gap: 4px;
    height: 40px;
    border-top: 1px solid #63758e;
    background: linear-gradient(90deg, #7c91ae, #8299ba 60px, #a6bcdc 240px, #a6bcdc 75%, #8095ae 80%, #8095ae);
}

.orb {
    width: 56px;
    padding-left: 8px;
}

.app {
    display: flex;
    align-items: center;
    justify-content: center;
    width: 58px;
    height: 39px;
    border: 1px solid #5f7696;
    border-radius: 3px;
    background: linear-gradient(135deg, #dfe8f4, #b0c3de);
    box-shadow: inset 0 0 0 1px rgba(255, 255, 255, 0.6);
}

.win7-tray {
    display: flex;
    align-items: center;
    gap: 9px;
    margin-left: auto;
}

.win7-tray .restore {
    margin-bottom: 6px;
}

.clock {
    display: flex;
    flex-direction: column;
    width: 75px;
    padding-left: 6px;
    color: #fff;
    font: 12px/18px "Noto Sans", sans-serif;
    text-align: center;
}

.show-desktop {
    width: 14px;
    height: 40px;
    border: 1px solid #5b6e87;
    background: linear-gradient(135deg, #a9b8cb, #6b7f99);
}
```
